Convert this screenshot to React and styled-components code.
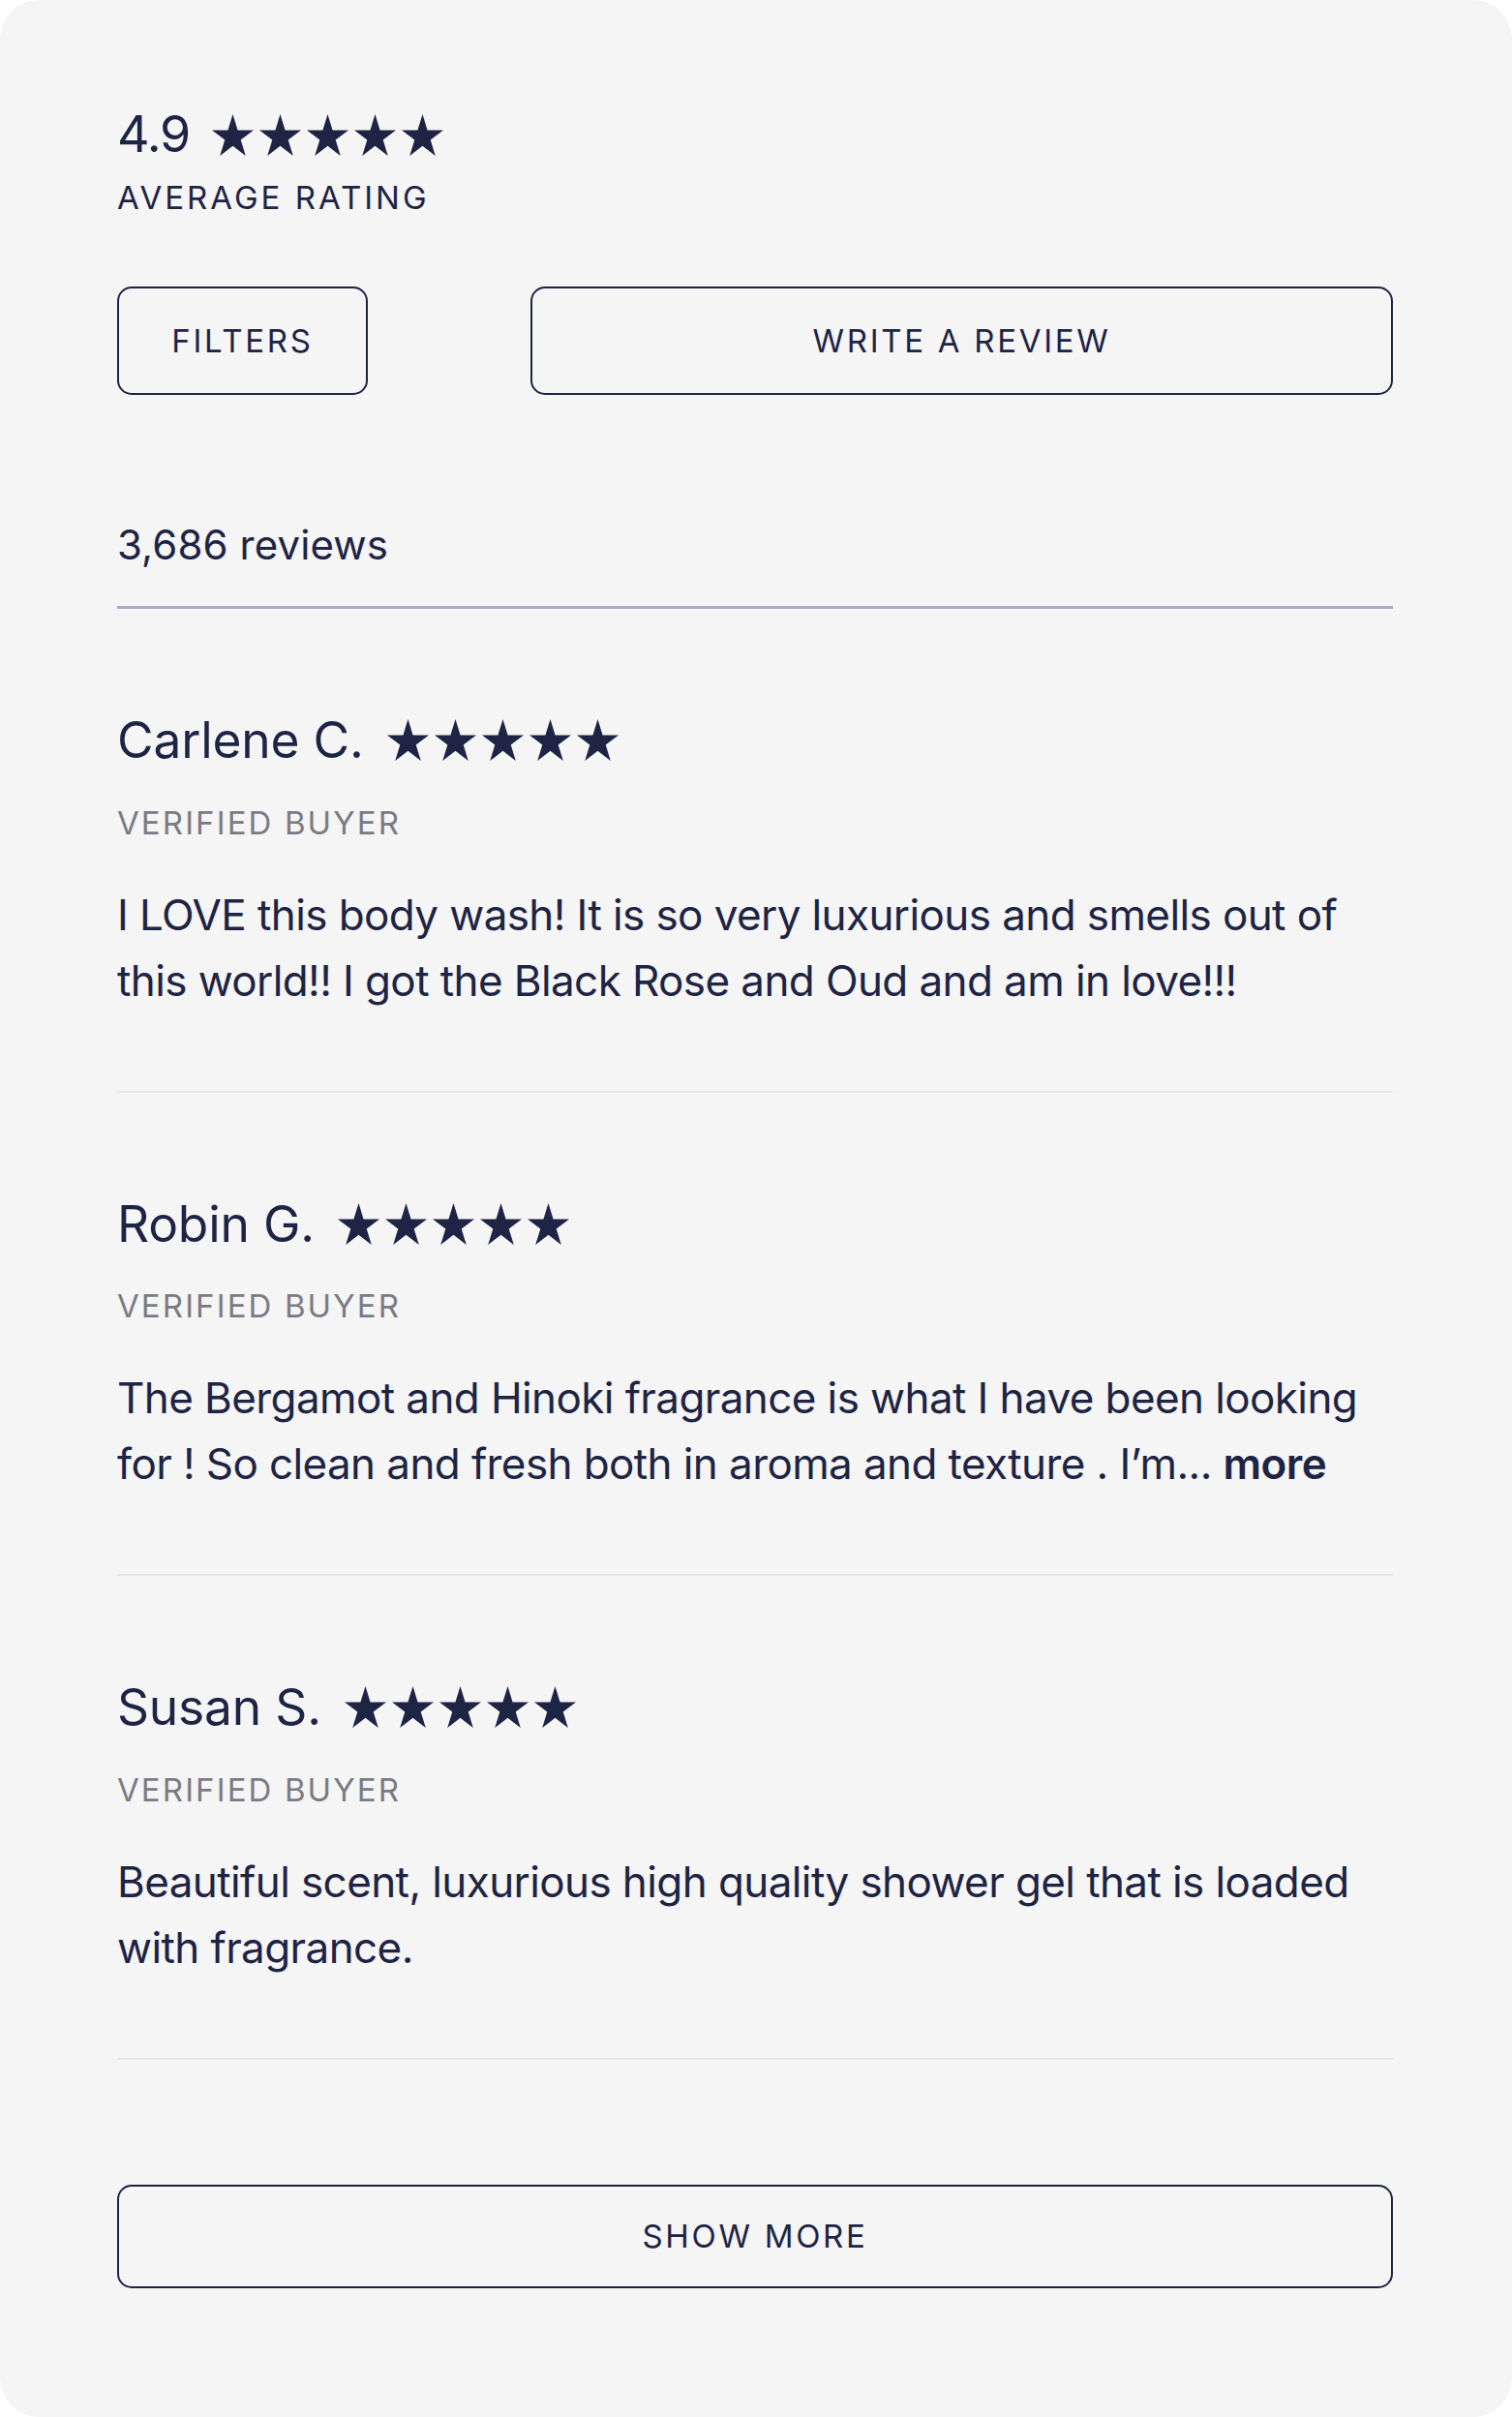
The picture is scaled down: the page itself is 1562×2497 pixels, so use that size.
import React from "react";
import styled, { createGlobalStyle } from "styled-components";

const GlobalStyle = createGlobalStyle`
  html, body {
    margin: 0;
    padding: 0;
    background: #ffffff;
  }
  * { box-sizing: border-box; }
`;

const NAVY = "#1e2444";

const Page = styled.div`
  width: 1562px;
  min-height: 2497px;
  background: #f5f5f6;
  border-radius: 40px;
  padding: 113px 123px 133px 121px;
  font-family: Inter, "Liberation Sans", sans-serif;
  color: ${NAVY};
  display: flex;
  flex-direction: column;
`;

const RatingRow = styled.div`
  display: flex;
  align-items: center;
  gap: 23px;
`;

const RatingValue = styled.span`
  font-size: 52px;
  line-height: 1;
  font-weight: 400;
  letter-spacing: -1.2px;
`;

const StarRow = styled.div`
  display: flex;
  align-items: center;
  gap: ${(p) => p.$gap}px;
`;

const Caption = styled.div`
  margin-top: 23px;
  font-size: 33px;
  line-height: 1;
  letter-spacing: 3px;
  text-transform: uppercase;
`;

const ButtonRow = styled.div`
  display: flex;
  justify-content: space-between;
  margin-top: 75px;
`;

const OutlineButton = styled.button`
  width: ${(p) => p.$width};
  height: ${(p) => p.$height}px;
  border: 2px solid ${NAVY};
  border-radius: 15px;
  background: transparent;
  color: ${NAVY};
  font-family: Inter, "Liberation Sans", sans-serif;
  font-size: 33px;
  letter-spacing: 2.7px;
  text-transform: uppercase;
  display: flex;
  align-items: center;
  justify-content: center;
  padding: 0;
`;

const Count = styled.div`
  margin-top: 134px;
  font-size: 42px;
  line-height: 1;
  letter-spacing: 0.1px;
`;

const TopRule = styled.hr`
  margin: 42px 0 0;
  border: 0;
  height: 3px;
  background: #a6abcb;
`;

const Review = styled.article`
  padding: 110px 0 80px;
  border-bottom: 2px solid #e6e6ea;
`;

const NameRow = styled.div`
  display: flex;
  align-items: center;
  gap: 24px;
`;

const Name = styled.h3`
  margin: 0;
  font-size: 51.5px;
  line-height: 1;
  font-weight: 400;
  letter-spacing: -0.2px;
`;

const Verified = styled.div`
  margin-top: 43px;
  font-size: 33px;
  line-height: 1;
  letter-spacing: 2.1px;
  color: #7b7b83;
  text-transform: uppercase;
`;

const Body = styled.p`
  margin: 44px 0 0;
  font-size: 44px;
  line-height: 68px;
  letter-spacing: -0.6px;
`;

const More = styled.strong`
  font-weight: 600;
`;

const ShowMoreWrap = styled.div`
  margin-top: 129px;
`;

const Star = ({ size }) => (
  <svg width={size} height={size} viewBox="0 0 100 95.1" preserveAspectRatio="none" aria-hidden="true">
    <polygon
      fill={NAVY}
      points="50,0 61.8,36.32 100,36.32 69.1,58.77 80.9,95.1 50,72.65 19.1,95.1 30.9,58.77 0,36.32 38.2,36.32"
    />
  </svg>
);

const Stars = ({ size = 42, gap = 6 }) => (
  <StarRow $gap={gap}>
    {[0, 1, 2, 3, 4].map((i) => (
      <Star key={i} size={size} />
    ))}
  </StarRow>
);

const reviews = [
  {
    name: "Carlene C.",
    text: "I LOVE this body wash! It is so very luxurious and smells out of this world!! I got the Black Rose and Oud and am in love!!!",
  },
  {
    name: "Robin G.",
    text: "The Bergamot and Hinoki fragrance is what I have been looking for ! So clean and fresh both in aroma and texture . I\u2019m...",
    more: true,
  },
  {
    name: "Susan S.",
    text: "Beautiful scent, luxurious high quality shower gel that is loaded with fragrance.",
  },
];

export default function App() {
  return (
    <>
      <GlobalStyle />
      <Page>
        <RatingRow>
          <RatingValue>4.9</RatingValue>
          <Stars size={43} gap={6} />
        </RatingRow>
        <Caption>Average rating</Caption>
        <ButtonRow>
          <OutlineButton $width="259px" $height={112}>Filters</OutlineButton>
          <OutlineButton $width="891px" $height={112}>Write a review</OutlineButton>
        </ButtonRow>
        <Count>3,686 reviews</Count>
        <TopRule />
        {reviews.map((r) => (
          <Review key={r.name}>
            <NameRow>
              <Name>{r.name}</Name>
              <Stars size={43} gap={6} />
            </NameRow>
            <Verified>Verified buyer</Verified>
            <Body>
              {r.text}
              {r.more && <> <More>more</More></>}
            </Body>
          </Review>
        ))}
        <ShowMoreWrap>
          <OutlineButton $width="100%" $height={107}>Show more</OutlineButton>
        </ShowMoreWrap>
      </Page>
    </>
  );
}
